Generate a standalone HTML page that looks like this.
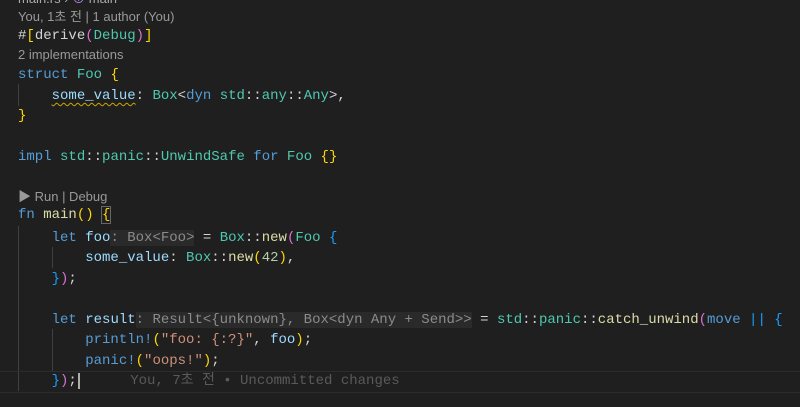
<!DOCTYPE html>
<html><head><meta charset="utf-8"><style>
html,body{margin:0;padding:0;background:#1f1f1f;width:800px;height:407px;overflow:hidden;position:relative}
.l{position:absolute;left:18px;white-space:pre;font-family:"Liberation Mono","Noto Sans CJK KR",monospace;font-size:14px;line-height:20px;color:#d4d4d4}
.c{position:absolute;left:18px;white-space:pre;font-family:"Liberation Sans","Noto Sans CJK KR",sans-serif;font-size:13px;line-height:16px;color:#999}
.k{color:#569cd6}.t{color:#4ec9b0}.f{color:#dcdcaa}.v{color:#9cdcfe}.s{color:#ce9178}.n{color:#b5cea8}
.b1{color:#ffd700}.b2{color:#da70d6}.b3{color:#179fff}
.h{color:#8b8b8b;background:#2a2a2a}
.g{position:absolute;width:1px;background:#404040}
.sq{text-decoration:underline wavy #cca700;text-underline-offset:3px;text-decoration-thickness:1px}
</style></head><body>
<div class="c" style="top:-9px;color:#aaa">main.rs › <span style="color:#b180d7">⊕</span> main</div>
<div class="g" style="left:18px;top:84px;height:22px"></div>
<div class="g" style="left:18px;top:226px;height:165px"></div>
<div class="g" style="left:52px;top:247px;height:21px"></div>
<div class="g" style="left:52px;top:329px;height:42px"></div>
<div style="position:absolute;left:0;top:371px;width:800px;height:20px;border-top:1px solid #2c2c2c;border-bottom:1px solid #2c2c2c"></div>
<div class="c" style="top:9px">You, 1초 전 | 1 author (You)</div>
<div class="l" style="top:26px">#<span class="b1">[</span>derive<span class="b2">(</span><span class="t">Debug</span><span class="b2">)</span><span class="b1">]</span></div>
<div class="c" style="top:47px">2 implementations</div>
<div class="l" style="top:65px"><span class="k">struct</span> <span class="t">Foo</span> <span class="b1">{</span></div>
<div class="l" style="top:86px">    <span class="v sq">some_value</span>: <span class="t">Box</span>&lt;<span class="k">dyn</span> <span class="t">std</span>::<span class="t">any</span>::<span class="t">Any</span>&gt;,</div>
<div class="l" style="top:106px"><span class="b1">}</span></div>
<div class="l" style="top:147px"><span class="k">impl</span> <span class="t">std</span>::<span class="t">panic</span>::<span class="t">UnwindSafe</span> <span class="k">for</span> <span class="t">Foo</span> <span class="b1">{}</span></div>
<div class="c" style="top:189px">▶ Run | Debug</div>
<div class="l" style="top:205px"><span class="k">fn</span> <span class="f">main</span><span class="b1">()</span> <span class="b1" style="outline:1px solid #666">{</span></div>
<div class="l" style="top:228px">    <span class="k">let</span> <span class="v">foo</span><span class="h">: Box&lt;Foo&gt;</span> = <span class="t">Box</span>::<span class="f">new</span><span class="b2">(</span><span class="t">Foo</span> <span class="b3">{</span></div>
<div class="l" style="top:248px">        <span class="v">some_value</span>: <span class="t">Box</span>::<span class="f">new</span><span class="b1">(</span><span class="n">42</span><span class="b1">)</span>,</div>
<div class="l" style="top:269px">    <span class="b3">}</span><span class="b2">)</span>;</div>
<div class="l" style="top:310px">    <span class="k">let</span> <span class="v">result</span><span class="h">: Result&lt;{unknown}, Box&lt;dyn Any + Send&gt;&gt;</span> = <span class="t">std</span>::<span class="t">panic</span>::<span class="f">catch_unwind</span><span class="b2">(</span><span class="k">move</span> <span class="b3">||</span> <span class="b3">{</span></div>
<div class="l" style="top:330px">        <span class="k">println!</span><span class="b1">(</span><span class="s">"foo: {:?}"</span>, <span class="v">foo</span><span class="b1">)</span>;</div>
<div class="l" style="top:351px">        <span class="k">panic!</span><span class="b1">(</span><span class="s">"oops!"</span><span class="b1">)</span>;</div>
<div class="l" style="top:371px">    <span class="b3">}</span><span class="b2">)</span>;<span style="border-left:2px solid #aeafad;margin-left:1px"></span>      <span style="color:#5a5a5a">You, 7초 전 • Uncommitted changes</span></div>
</body></html>
